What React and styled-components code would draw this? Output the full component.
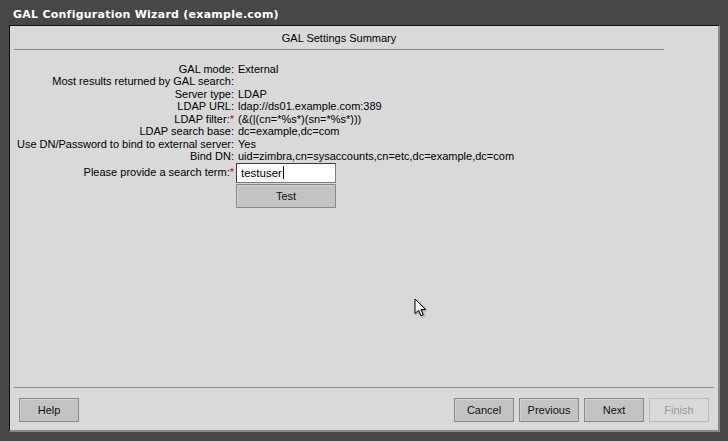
import React from 'react';
import styled, { createGlobalStyle } from 'styled-components';

const Global = createGlobalStyle`
  html, body {
    margin: 0;
    padding: 0;
    background: #474747;
  }
`;

const summary = [
  { label: 'GAL mode:', value: 'External' },
  { label: 'Most results returned by GAL search:', value: '' },
  { label: 'Server type:', value: 'LDAP' },
  { label: 'LDAP URL:', value: 'ldap://ds01.example.com:389' },
  { label: 'LDAP filter:', value: '(&(|(cn=*%s*)(sn=*%s*)))', required: true },
  { label: 'LDAP search base:', value: 'dc=example,dc=com' },
  { label: 'Use DN/Password to bind to external server:', value: 'Yes' },
  { label: 'Bind DN:', value: 'uid=zimbra,cn=sysaccounts,cn=etc,dc=example,dc=com' },
];

const App = () => {
  return (
    <Window>
      <Global />
      <TitleBar>GAL Configuration Wizard (example.com)</TitleBar>
      <Panel>
        <Header>GAL Settings Summary</Header>
        <Body>
          <Form>
            {summary.map(row => (
              <React.Fragment key={row.label}>
                <Label>
                  {row.label}
                  {row.required && <Req>*</Req>}
                </Label>
                <Value>{row.value}</Value>
              </React.Fragment>
            ))}
            <Label>
              Please provide a search term:<Req>*</Req>
            </Label>
            <TextBox>
              testuser
              <Caret />
            </TextBox>
            <span />
            <Button $wide>Test</Button>
          </Form>
        </Body>
        <Footer>
          <Button>Help</Button>
          <Spacer />
          <Button>Cancel</Button>
          <Button>Previous</Button>
          <Button>Next</Button>
          <Button disabled>Finish</Button>
        </Footer>
      </Panel>
      <Pointer width='14' height='20' viewBox='0 0 14 20'>
        <path
          d='M1 1 L1 15.5 L4.6 12.2 L7 17.8 L9.2 16.8 L6.9 11.4 L11.6 11.4 Z'
          fill='#fff'
          stroke='#000'
          strokeWidth='1'
          strokeLinejoin='miter'
        />
      </Pointer>
    </Window>
  );
};

const Window = styled.div`
  position: relative;
  width: 728px;
  height: 441px;
  box-sizing: border-box;
  padding: 0 8px 9px 9px;
  background: #474747;
  display: flex;
  flex-direction: column;
  font-family: 'Liberation Sans', Arial, sans-serif;
  font-size: 11px;
  color: #000;
  overflow: hidden;
`;

const TitleBar = styled.div`
  height: 25px;
  box-sizing: border-box;
  padding: 4px 0 0 4px;
  display: flex;
  align-items: center;
  font-family: 'DejaVu Sans', sans-serif;
  font-weight: bold;
  font-size: 11px;
  letter-spacing: 0.25px;
  color: #fff;
`;

const Panel = styled.div`
  flex: 1;
  display: flex;
  flex-direction: column;
  background: #d9d9d9;
  border-top: 1px solid #111;
  border-left: 1px solid #111;
  border-right: 2px solid #8a8a8a;
  border-bottom: 2px solid #8a8a8a;
`;

const Header = styled.div`
  width: 650px;
  height: 22px;
  margin-left: 4px;
  border-bottom: 1px solid #8c8c8c;
  display: flex;
  align-items: center;
  justify-content: center;
  padding-top: 1px;
  box-sizing: content-box;
`;

const Body = styled.div`
  flex: 1;
  padding-top: 13px;
`;

const Form = styled.div`
  display: grid;
  grid-template-columns: 224px 100px;
  column-gap: 2px;
  grid-auto-rows: auto;
  align-items: center;
`;

const Label = styled.div`
  text-align: right;
  line-height: 12.43px;
  white-space: nowrap;
`;

const Value = styled.div`
  line-height: 12.43px;
  padding-left: 2px;
  white-space: nowrap;
  min-height: 12.43px;
`;

const Req = styled.span`
  color: #c00000;
`;

const TextBox = styled.div`
  height: 20px;
  box-sizing: border-box;
  background: #fff;
  border: 1px solid #7a7a7a;
  border-top-color: #3a3a3a;
  border-left-color: #3a3a3a;
  padding: 0 4px;
  display: flex;
  align-items: center;
  font-size: 11.5px;
`;

const Caret = styled.span`
  display: inline-block;
  width: 1px;
  height: 13px;
  margin-left: 1px;
  background: #000;
`;

const Button = styled.div`
  width: ${p => (p.$wide ? '100px' : '60px')};
  height: 24px;
  box-sizing: border-box;
  margin-top: ${p => (p.$wide ? '1px' : '0')};
  display: flex;
  align-items: center;
  justify-content: center;
  background: ${p => (p.disabled ? '#d9d9d9' : '#c3c3c3')};
  border: 1px solid ${p => (p.disabled ? '#bdbdbd' : '#8a8a8a')};
  box-shadow: ${p => (p.disabled ? 'none' : 'inset 1px 1px 0 #d0d0d0')};
  color: ${p => (p.disabled ? '#9a9a9a' : '#111')};
`;

const Footer = styled.div`
  margin: 0 4px;
  border-top: 1px solid #8c8c8c;
  padding: 10px 5px 8px 5px;
  display: flex;
  gap: 5px;
`;

const Spacer = styled.div`
  flex: 1;
`;

const Pointer = styled.svg`
  position: absolute;
  left: 414px;
  top: 298px;
  filter: drop-shadow(1px 1px 1px rgba(0, 0, 0, 0.35));
`;

export default App;
